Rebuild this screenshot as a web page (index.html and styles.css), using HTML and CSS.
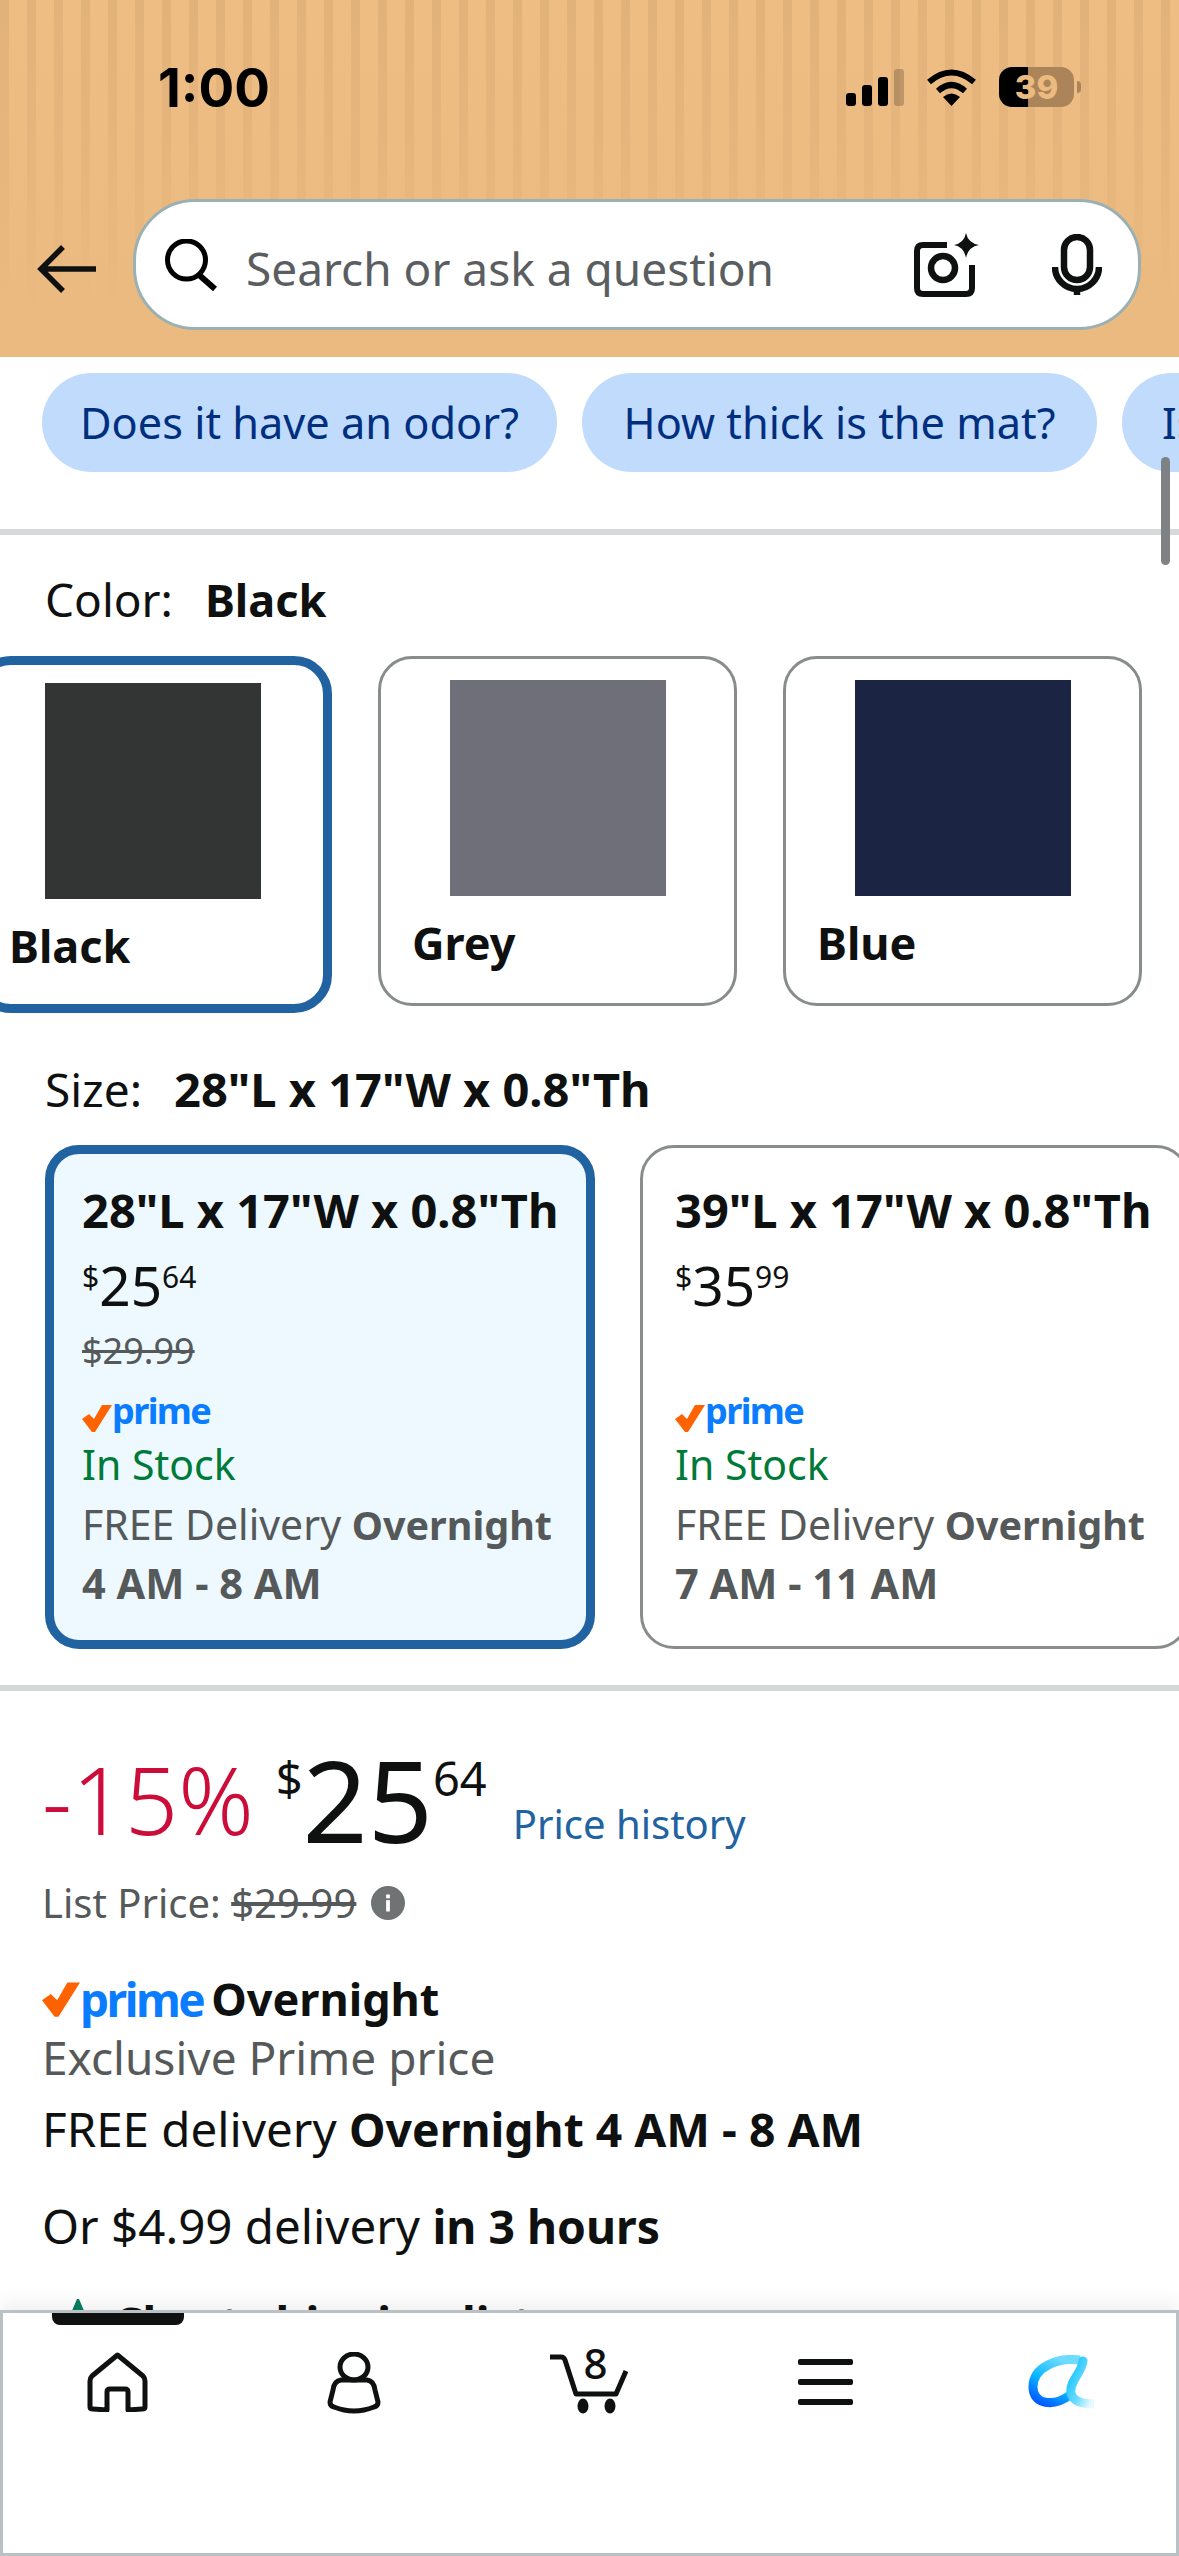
FILE: index.html
```html
<!DOCTYPE html>
<html>
  <head>
    <meta name="viewport" content="width=device-width, initial-scale=1" />
    <title>Product options</title>
    <link rel="stylesheet" href="styles.css">
  </head>

  <body>
    <div class="phone">
      <header class="topbar">
        <div class="status">
          <span class="time">1:00</span>
          <div class="status-icons">
            <svg class="signal" width="58" height="37" viewBox="0 0 58 37">
              <rect x="0" y="24" width="10" height="13" rx="3" fill="#000"/>
              <rect x="16" y="16" width="10" height="21" rx="3" fill="#000"/>
              <rect x="32" y="8" width="10" height="29" rx="3" fill="#000"/>
              <rect x="48" y="0" width="10" height="37" rx="3" fill="#000" opacity="0.2"/>
            </svg>
            <svg class="wifi" width="51" height="37" viewBox="0 0 51 37">
              <path d="M3 13 Q25.500 -6 48 13" fill="none" stroke="#000" stroke-width="6"/>
              <path d="M12 22 Q25.500 10 39 22" fill="none" stroke="#000" stroke-width="6"/>
              <path d="M17 28 Q25.500 21 34 28 L25.500 37 Z" fill="#000"/>
            </svg>
            <div class="battery"><span>39</span></div>
            <div class="nib"></div>
          </div>
        </div>
        <div class="search-row">
          <svg class="back" width="60" height="48" viewBox="0 0 60 48">
            <path d="M26 2 L4 24 L26 46 M4 24 H59" fill="none" stroke="#0f1111" stroke-width="5.500"/>
          </svg>
          <div class="search">
            <svg class="glass" width="53" height="52" viewBox="0 0 53 52">
              <circle cx="21.500" cy="21" r="19" fill="none" stroke="#000" stroke-width="5"/>
              <path d="M33 35 L50 50" fill="none" stroke="#000" stroke-width="6"/>
            </svg>
            <span class="placeholder">Search or ask a question</span>
            <svg class="camera" width="66" height="64" viewBox="0 0 66 64">
              <path d="M33 12 H9 Q3 12 3 18 V55 Q3 61 9 61 H52 Q58 61 58 55 V32" fill="none" stroke="#0f1111" stroke-width="6"/>
              <circle cx="29" cy="35" r="12" fill="none" stroke="#0f1111" stroke-width="6.500"/>
              <path d="M52 0 Q54 10 65 12 Q54 14 52 25 Q50 14 40 12 Q50 10 52 0 Z" fill="#0f1111"/>
            </svg>
            <svg class="mic" width="50" height="62" viewBox="0 0 50 62">
              <rect x="12" y="3" width="26" height="43" rx="13" fill="none" stroke="#0f1111" stroke-width="6.500"/>
              <path d="M3 33 A22 22 0 0 0 47 33" fill="none" stroke="#0f1111" stroke-width="6.500"/>
              <path d="M25 54 V61" fill="none" stroke="#0f1111" stroke-width="6.500"/>
            </svg>
          </div>
        </div>
      </header>

      <main class="content">
        <div class="chips">
          <span class="chip">Does it have an odor?</span>
          <span class="chip">How thick is the mat?</span>
          <span class="chip">Is it slip resistant?</span>
        </div>
        <div class="scrollbar"></div>
        <hr class="rule" />

        <section class="colors">
          <p class="option-label">Color:<b>Black</b></p>
          <div class="swatches">
            <div class="swatch selected">
              <div class="patch black"></div>
              <b>Black</b>
            </div>
            <div class="swatch">
              <div class="patch grey"></div>
              <b>Grey</b>
            </div>
            <div class="swatch">
              <div class="patch blue"></div>
              <b>Blue</b>
            </div>
          </div>
        </section>

        <section class="sizes">
          <p class="option-label">Size:<b>28"L x 17"W x 0.8"Th</b></p>
          <div class="size-cards">
            <div class="size-card selected">
              <h3>28"L x 17"W x 0.8"Th</h3>
              <div class="mini-price"><sup>$</sup>25<sup>64</sup></div>
              <div class="was"><s>$29.99</s></div>
              <div class="prime-small">
                <svg width="30" height="28" viewBox="0 0 30 28"><path d="M0 15 L7 10 L12 15 L20 1 L30 1 L13 28 L10 28 Z" fill="#ff6200"/></svg>
                <span>prime</span>
              </div>
              <div class="stock">In Stock</div>
              <div class="ship">FREE Delivery <b>Overnight</b></div>
              <div class="ship window"><b>4 AM - 8 AM</b></div>
            </div>
            <div class="size-card">
              <h3>39"L x 17"W x 0.8"Th</h3>
              <div class="mini-price"><sup>$</sup>35<sup>99</sup></div>
              <div class="was"></div>
              <div class="prime-small">
                <svg width="30" height="28" viewBox="0 0 30 28"><path d="M0 15 L7 10 L12 15 L20 1 L30 1 L13 28 L10 28 Z" fill="#ff6200"/></svg>
                <span>prime</span>
              </div>
              <div class="stock">In Stock</div>
              <div class="ship">FREE Delivery <b>Overnight</b></div>
              <div class="ship window"><b>7 AM - 11 AM</b></div>
            </div>
          </div>
        </section>
        <hr class="rule" />

        <section class="buy">
          <div class="price-row">
            <span class="discount">-15%</span>
            <span class="price"><sup>$</sup>25<sup>64</sup></span>
            <span class="history">Price history</span>
          </div>
          <div class="list-price">
            <span>List Price: <s>$29.99</s></span>
            <svg width="34" height="34" viewBox="0 0 36 36">
              <circle cx="18" cy="18" r="18" fill="#6f7373"/>
              <rect x="16" y="15" width="4" height="12" fill="#fff"/>
              <rect x="16" y="9" width="4" height="4" fill="#fff"/>
            </svg>
          </div>
          <div class="prime-big">
            <svg width="38" height="36" viewBox="0 0 30 28"><path d="M0 15 L7 10 L12 15 L20 1 L30 1 L13 28 L10 28 Z" fill="#ff6200"/></svg>
            <span class="word">prime</span>
            <b>Overnight</b>
          </div>
          <div class="exclusive">Exclusive Prime price</div>
          <div class="delivery">FREE delivery <b>Overnight 4 AM - 8 AM</b></div>
          <div class="delivery second">Or $4.99 delivery <b>in 3 hours</b></div>
          <div class="lists">
            <svg width="30" height="30" viewBox="0 0 30 30"><path d="M4 30 L15 4 L26 30" fill="none" stroke="#067d62" stroke-width="5"/></svg>
            <b>Chart shipping list</b>
          </div>
        </section>
      </main>

      <nav class="tabs">
        <div class="indicator"></div>
        <div class="tab">
          <svg width="61" height="60" viewBox="0 0 61 60">
            <path d="M30.500 3 L56 24 Q58 26 58 29 V55 Q58 57 55 57 L41 58 V40 Q41 37 38 37 H23 Q20 37 20 40 V58 L6 57 Q3 57 3 55 V29 Q3 26 5 24 Z" fill="none" stroke="#0f1111" stroke-width="5" stroke-linejoin="round"/>
          </svg>
        </div>
        <div class="tab">
          <svg width="54" height="62" viewBox="0 0 54 62">
            <ellipse cx="27" cy="15" rx="14" ry="13" fill="none" stroke="#0f1111" stroke-width="5"/>
            <path d="M14 28 H40 Q47 29 48 38 L51 50 Q51 54 47 55 Q27 63 7 55 Q3 54 3 50 L6 38 Q7 29 14 28 Z" fill="none" stroke="#0f1111" stroke-width="5" stroke-linejoin="round"/>
          </svg>
        </div>
        <div class="tab cart">
          <svg width="80" height="66" viewBox="0 0 80 66">
            <path d="M1 8 H12 Q15 8 16 11 L27 45 H67 L77 22" fill="none" stroke="#0f1111" stroke-width="5" stroke-linejoin="round"/>
            <ellipse cx="34" cy="57" rx="5.500" ry="7.500" fill="#0f1111"/>
            <ellipse cx="61" cy="57" rx="5.500" ry="7.500" fill="#0f1111"/>
          </svg>
          <span class="count">8</span>
        </div>
        <div class="tab">
          <div class="burger"><i></i><i></i><i></i></div>
        </div>
        <div class="tab logo">
          <svg width="66" height="54" viewBox="0 0 66 54">
            <defs>
              <linearGradient id="loop" x1="0" y1="1" x2="0.600" y2="0">
                <stop offset="0" stop-color="#0050ff"/>
                <stop offset="0.500" stop-color="#0ab8ff"/>
                <stop offset="1" stop-color="#6fdcff"/>
              </linearGradient>
              <linearGradient id="tail" x1="0" y1="0" x2="1" y2="0.800">
                <stop offset="0" stop-color="#0ac0ff"/>
                <stop offset="0.600" stop-color="#6fdcff"/>
                <stop offset="1" stop-color="#e8f9ff"/>
              </linearGradient>
            </defs>
            <path d="M52 5 C30 2 5 12 5 32 C5 50 26 52 42 40" fill="none" stroke="url(#loop)" stroke-width="9"/>
            <path d="M55 6 C54 18 41 26 43 38 C45 47 56 49 66 49" fill="none" stroke="url(#tail)" stroke-width="9" stroke-linecap="round"/>
          </svg>
        </div>
      </nav>
    </div>
  </body>
</html>
```

FILE: styles.css
```css
* {
  box-sizing: border-box;
}

body {
  margin: 0;
  font-family: "Noto Sans", "Open Sans", sans-serif;
  color: #0f1111;
  background-color: #fff;
}

.phone {
  width: 1179px;
  height: 2556px;
  position: relative;
  overflow: hidden;
  background-color: #fff;
}

/* top orange area */
.topbar {
  height: 357px;
  background-color: #ebba80;
  background-image:
    linear-gradient(to bottom, rgba(235, 186, 128, 0) 0, rgba(235, 186, 128, 0.3) 120px, #ebba80 310px),
    repeating-linear-gradient(to right, #e2b27b 0, #e2b27b 9px, #edbd84 9px, #edbd84 27px);
}

.status {
  height: 199px;
  display: flex;
  justify-content: space-between;
  align-items: flex-start;
  padding: 60px 98px 0 158px;
}

.time {
  font-family: Inter, sans-serif;
  font-weight: 700;
  font-size: 53px;
  line-height: 56px;
  color: #000;
}

.status-icons {
  display: flex;
  align-items: center;
  margin-top: 7px;
}

.signal {
  display: block;
}

.wifi {
  display: block;
  margin-left: 22px;
}

.battery {
  width: 75px;
  height: 40px;
  margin-left: 22px;
  border-radius: 13px;
  background: linear-gradient(to right, #000 0, #000 29px, #ab8559 29px, #ab8559 100%);
  text-align: center;
  font-family: Inter, sans-serif;
  font-weight: 800;
  font-size: 33px;
  line-height: 40px;
  color: #ebba80;
}

.nib {
  width: 4px;
  height: 12px;
  margin-left: 3px;
  border-radius: 0 4px 4px 0;
  background-color: #ab8559;
}

.search-row {
  display: flex;
  align-items: center;
  padding-left: 37px;
}

.back {
  display: block;
  margin-right: 36px;
  margin-top: 8px;
}

.search {
  width: 1008px;
  height: 131px;
  display: flex;
  align-items: center;
  padding: 0 36px 0 29px;
  background-color: #fff;
  border: 3px solid #9bb0b3;
  border-radius: 62px;
}

.glass {
  display: block;
}

.placeholder {
  flex: 1;
  margin-left: 28px;
  margin-top: 6px;
  font-size: 46px;
  color: #5a5e60;
}

.camera {
  display: block;
  margin-right: 72px;
}

.mic {
  display: block;
}

.content {
  height: 1953px;
  overflow: hidden;
}

.chips {
  display: flex;
  gap: 25px;
  padding: 16px 0 0 42px;
  height: 172px;
  white-space: nowrap;
}

.chip {
  flex: 0 0 515px;
  height: 99px;
  border-radius: 50px;
  background-color: #c1dbfd;
  color: #002f7f;
  text-align: center;
  font-size: 43.300px;
  line-height: 99px;
}

.chip:last-child {
  text-align: left;
  padding-left: 40px;
}

.scrollbar {
  position: absolute;
  left: 1161px;
  top: 457px;
  width: 9px;
  height: 108px;
  border-radius: 5px;
  background-color: #7f8285;
}

.rule {
  height: 6px;
  margin: 0;
  border: none;
  background-color: #d5d9d9;
}

.option-label {
  margin: 0;
  font-size: 46px;
  line-height: 56px;
}

.option-label b {
  margin-left: 32px;
}

.colors {
  padding: 36px 0 0 45px;
}

.colors .option-label b {
  font-size: 45px;
}

.swatches {
  display: flex;
  align-items: flex-start;
  gap: 46px;
  margin: 28px 0 0 -72px;
}

.swatch {
  flex: none;
  width: 359px;
  height: 350px;
  padding: 21px 0 0 69px;
  border: 3px solid #888c8c;
  border-radius: 34px;
  font-size: 45px;
}

.swatch b {
  display: block;
  margin: 19px 0 0 -38px;
  line-height: 56px;
}

.swatch.selected {
  width: 359px;
  height: 357px;
  padding: 18px 0 0 63px;
  border: 9px solid #2162a1;
  border-radius: 38px;
}

.swatch.selected b {
  margin: 19px 0 0 -36px;
}

.patch {
  width: 216px;
  height: 216px;
}

.black {
  background-color: #333434;
}

.grey {
  background-color: #6f6f79;
}

.blue {
  background-color: #1b2443;
}

.sizes {
  padding: 48px 0 36px 45px;
}

.sizes .option-label b {
  font-size: 47px;
}

.size-cards {
  display: flex;
  gap: 45px;
  margin-top: 28px;
}

.size-card {
  flex: none;
  width: 550px;
  height: 504px;
  padding: 32px 0 0 32px;
  border: 3px solid #888c8c;
  border-radius: 34px;
  white-space: nowrap;
}

.size-card.selected {
  padding: 26px 0 0 28px;
  border: 9px solid #2162a1;
  background-color: #edf8ff;
}

.size-card h3 {
  margin: 0;
  font-size: 47px;
  line-height: 60px;
  font-weight: 700;
}

.mini-price {
  height: 92px;
  font-size: 55px;
  line-height: 90px;
}

.mini-price sup {
  font-size: 30px;
  line-height: 30px;
  vertical-align: 18px;
}

.was {
  height: 38px;
  font-size: 36px;
  line-height: 38px;
  color: #565959;
}

.prime-small {
  height: 48px;
  margin-top: 18px;
  display: flex;
  align-items: flex-end;
  padding-bottom: 4px;
}

.prime-small span {
  font-size: 36px;
  line-height: 42px;
  font-weight: 700;
  letter-spacing: -1.600px;
  color: #0a7cff;
}

.stock {
  height: 59px;
  font-size: 41px;
  line-height: 56px;
  color: #007a37;
}

.ship {
  font-size: 41px;
  line-height: 58px;
  color: #565959;
}

.ship b {
  font-size: 39.500px;
}

.ship.window b {
  font-size: 41.500px;
}

.buy {
  padding: 43px 0 0 42px;
  white-space: nowrap;
}

.price-row {
  display: flex;
  align-items: center;
  height: 130px;
}

.discount {
  font-size: 93px;
  line-height: 110px;
  font-weight: 300;
  color: #cc0c39;
}

.price {
  margin-left: 22px;
  font-size: 114px;
  line-height: 124px;
}

.price sup {
  font-size: 47px;
  line-height: 47px;
  vertical-align: 47px;
}

.history {
  margin: 50px 0 0 26px;
  font-size: 40px;
  line-height: 56px;
  color: #2162a1;
}

.list-price {
  display: flex;
  align-items: center;
  gap: 15px;
  margin-top: 11px;
  font-size: 40px;
  line-height: 56px;
  color: #565959;
}

.prime-big {
  display: flex;
  align-items: center;
  margin-top: 38px;
  height: 59px;
}

.prime-big .word {
  font-size: 46px;
  line-height: 60px;
  font-weight: 700;
  letter-spacing: -2.500px;
  color: #0a7cff;
}

.prime-big b {
  margin-left: 8px;
  font-size: 45px;
  line-height: 60px;
}

.exclusive {
  font-size: 46px;
  line-height: 58px;
  color: #565959;
}

.delivery {
  margin-top: 13px;
  font-size: 47.500px;
  line-height: 60px;
}

.delivery b {
  font-size: 46.300px;
}

.delivery.second {
  margin-top: 36px;
}

.lists {
  display: flex;
  align-items: flex-start;
  gap: 20px;
  margin: 36px 0 0 21px;
  font-size: 46px;
  line-height: 60px;
}

.lists svg {
  margin-top: 6px;
}

/* bottom bar sits over the page */
.tabs {
  position: absolute;
  left: 0;
  right: 0;
  top: 2310px;
  height: 246px;
  display: grid;
  grid-template-columns: repeat(5, 1fr);
  background-color: #fff;
  box-shadow: inset 0 0 0 3px #b9c1c4, 0 -8px 16px rgba(15, 17, 17, 0.06);
}

.tab {
  position: relative;
  display: flex;
  justify-content: center;
  align-items: flex-start;
  padding-top: 42px;
}

.tab svg {
  display: block;
}

.cart svg {
  margin-top: -3px;
}

.logo svg {
  margin-top: 3px;
}

.count {
  position: absolute;
  left: 112px;
  top: 31px;
  font-size: 42px;
  line-height: 44px;
  font-weight: 500;
}

.indicator {
  position: absolute;
  left: 52px;
  top: 3px;
  width: 132px;
  height: 12px;
  border-radius: 0 0 8px 8px;
  background-color: #0f1111;
}

.burger {
  margin-top: 7px;
  width: 55px;
}

.burger i {
  display: block;
  height: 6px;
  margin-bottom: 14px;
  border-radius: 2px;
  background-color: #0f1111;
}
```
